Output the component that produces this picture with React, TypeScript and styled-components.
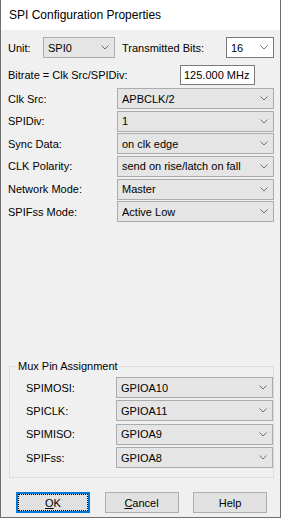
import React from 'react'
import styled, { createGlobalStyle } from 'styled-components'

const GlobalStyle = createGlobalStyle`
  html, body {
    margin: 0;
    padding: 0;
    background: #ffffff;
  }
  * {
    box-sizing: border-box;
  }
`

const Window = styled.div`
  width: 281px;
  height: 518px;
  display: flex;
  flex-direction: column;
  background: #f0f0f0;
  border: 1px solid #6f6f6f;
  border-top: none;
  font-family: 'Liberation Sans', Arial, sans-serif;
  font-size: 11px;
  color: #000;
`

const TitleBar = styled.div`
  height: 30px;
  flex: none;
  display: flex;
  align-items: center;
  padding-left: 8px;
  background: #ffffff;
  font-size: 12px;
`

const Body = styled.div`
  flex: 1;
  display: flex;
  flex-direction: column;
  padding: 7px 6px 4px 7px;
`

const TopRow = styled.div`
  display: flex;
  align-items: center;
  height: 21px;
`

const Label = styled.span<{ $width?: number }>`
  flex: none;
  width: ${(p) => (p.$width ? `${p.$width}px` : 'auto')};
  white-space: nowrap;
`

const BitsLabel = styled(Label)`
  margin-left: 7px;
`

const BitrateRow = styled.div`
  display: flex;
  align-items: center;
  height: 20px;
  margin-top: 7px;
`

const TextBox = styled.div`
  width: 75px;
  height: 20px;
  display: flex;
  align-items: center;
  padding-left: 3px;
  background: #ffffff;
  border: 1px solid #7a7a7a;
`

const FieldGrid = styled.div<{ $labelWidth: number; $gap: number }>`
  display: grid;
  grid-template-columns: ${(p) => p.$labelWidth}px 1fr;
  grid-auto-rows: 21px;
  row-gap: ${(p) => p.$gap}px;
  align-items: center;
`

const Fields = styled(FieldGrid)`
  margin-top: 3px;
`

const ComboBox = styled.div<{ $editable?: boolean; $width?: number }>`
  height: 21px;
  width: ${(p) => (p.$width ? `${p.$width}px` : 'auto')};
  flex: none;
  display: flex;
  align-items: center;
  justify-content: space-between;
  padding: 0 5px 0 4px;
  margin-left: ${(p) => (p.$editable ? 'auto' : '0')};
  background: ${(p) => (p.$editable ? '#ffffff' : '#e5e5e5')};
  border: 1px solid ${(p) => (p.$editable ? '#7a7a7a' : '#acacac')};
  white-space: nowrap;
`

const Chevron = () => (
  <svg width="8" height="5" viewBox="0 0 8 5">
    <polyline points="0.5,0.5 4,4 7.5,0.5" fill="none" stroke="#707070" strokeWidth="1" />
  </svg>
)

const Combo = ({ value, editable, width }: { value: string; editable?: boolean; width?: number }) => (
  <ComboBox $editable={editable} $width={width}>
    <span>{value}</span>
    <Chevron />
  </ComboBox>
)

const GroupBox = styled.fieldset`
  margin: auto 0 0 1px;
  padding: 4px 0 9px 16px;
  border: 1px solid #dcdcdc;
  min-width: 0;
`

const Legend = styled.legend`
  margin-left: -9px;
  padding: 0 1px;
  line-height: 13px;
`

const ButtonRow = styled.div`
  display: flex;
  gap: 14.5px;
  margin-top: 14px;
  padding-left: 8px;
`

const Button = styled.div<{ $default?: boolean }>`
  width: 74px;
  height: 21px;
  display: flex;
  background: #e1e1e1;
  border: ${(p) => (p.$default ? '2px solid #0078d7' : '1px solid #adadad')};
`

const ButtonFace = styled.span<{ $focused?: boolean }>`
  flex: 1;
  display: flex;
  align-items: center;
  justify-content: center;
  border: 1px ${(p) => (p.$focused ? 'dotted #000' : 'solid transparent')};
`

const fields = [
  ['Clk Src:', 'APBCLK/2'],
  ['SPIDiv:', '1'],
  ['Sync Data:', 'on clk edge'],
  ['CLK Polarity:', 'send on rise/latch on fall'],
  ['Network Mode:', 'Master'],
  ['SPIFss Mode:', 'Active Low'],
]

const pins = [
  ['SPIMOSI:', 'GPIOA10'],
  ['SPICLK:', 'GPIOA11'],
  ['SPIMISO:', 'GPIOA9'],
  ['SPIFss:', 'GPIOA8'],
]

const App = () => {
  return (
    <>
      <GlobalStyle />
      <Window>
        <TitleBar>SPI Configuration Properties</TitleBar>
        <Body>
          <TopRow>
            <Label $width={35}>Unit:</Label>
            <Combo value="SPI0" width={72} />
            <BitsLabel>Transmitted Bits:</BitsLabel>
            <Combo value="16" editable width={48} />
          </TopRow>
          <BitrateRow>
            <Label $width={172}>Bitrate = Clk Src/SPIDiv:</Label>
            <TextBox>125.000 MHz</TextBox>
          </BitrateRow>
          <Fields $labelWidth={109} $gap={1.67}>
            {fields.map(([label, value]) => (
              <React.Fragment key={label}>
                <Label>{label}</Label>
                <Combo value={value} />
              </React.Fragment>
            ))}
          </Fields>
          <GroupBox>
            <Legend>Mux Pin Assignment</Legend>
            <FieldGrid $labelWidth={90} $gap={2.33}>
              {pins.map(([label, value]) => (
                <React.Fragment key={label}>
                  <Label>{label}</Label>
                  <Combo value={value} />
                </React.Fragment>
              ))}
            </FieldGrid>
          </GroupBox>
          <ButtonRow>
            <Button $default>
              <ButtonFace $focused>
                <span><u>O</u>K</span>
              </ButtonFace>
            </Button>
            <Button>
              <ButtonFace>
                <span><u>C</u>ancel</span>
              </ButtonFace>
            </Button>
            <Button>
              <ButtonFace>Help</ButtonFace>
            </Button>
          </ButtonRow>
        </Body>
      </Window>
    </>
  )
}

export default App
